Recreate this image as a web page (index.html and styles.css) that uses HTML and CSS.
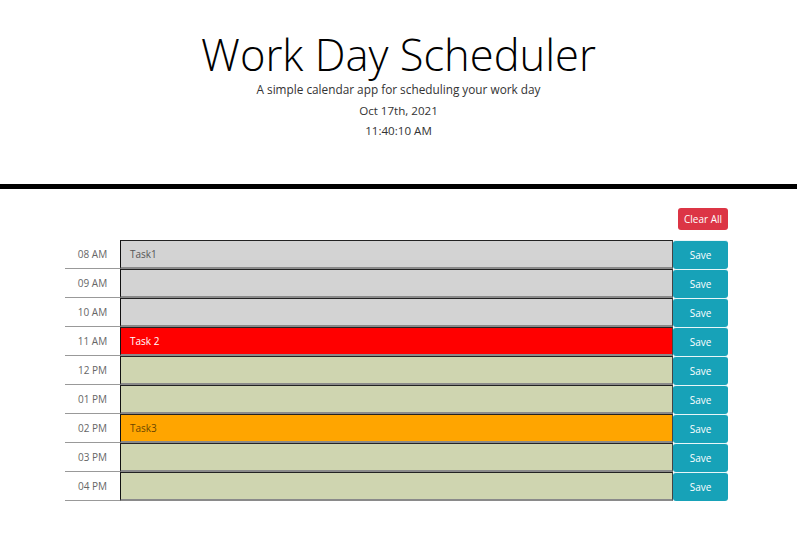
FILE: index.html
```html
<!DOCTYPE html>
<html lang="en">
<head>
<meta charset="utf-8">
<title>Work Day Scheduler</title>
<link rel="stylesheet" href="styles.css">
</head>
<body>
<header class="jumbotron">
  <h1 class="title">Work Day Scheduler</h1>
  <p class="lead">A simple calendar app for scheduling your work day</p>
  <p class="date">Oct 17th, 2021</p>
  <p class="clock">11:40:10 AM</p>
</header>
<main class="container">
  <div class="toolbar"><button class="clear-btn">Clear All</button></div>
  <div class="row"><div class="hour">08 AM</div><div class="description past">Task1</div><button class="save-btn">Save</button></div>
  <div class="row"><div class="hour">09 AM</div><div class="description past"></div><button class="save-btn">Save</button></div>
  <div class="row"><div class="hour">10 AM</div><div class="description past"></div><button class="save-btn">Save</button></div>
  <div class="row"><div class="hour">11 AM</div><div class="description present">Task 2</div><button class="save-btn">Save</button></div>
  <div class="row"><div class="hour">12 PM</div><div class="description future"></div><button class="save-btn">Save</button></div>
  <div class="row"><div class="hour">01 PM</div><div class="description future"></div><button class="save-btn">Save</button></div>
  <div class="row"><div class="hour">02 PM</div><div class="description marked">Task3</div><button class="save-btn">Save</button></div>
  <div class="row"><div class="hour">03 PM</div><div class="description future"></div><button class="save-btn">Save</button></div>
  <div class="row"><div class="hour">04 PM</div><div class="description future"></div><button class="save-btn">Save</button></div>
</main>
</body>
</html>
```
FILE: styles.css
```css
* { box-sizing: border-box; }
body {
  margin: 0;
  font-family: "Open Sans", "Liberation Sans", sans-serif;
  color: #212529;
  background: #fff;
}
.jumbotron {
  text-align: center;
  padding-top: 31px;
  height: 189px;
  border-bottom: 5px solid #000;
}
.title {
  margin: 0;
  font-size: 43.5px;
  font-weight: 300;
  line-height: 48px;
  color: #000;
}
.lead {
  margin: 2px 0 0;
  font-size: 11.8px;
  line-height: 16px;
  color: #333;
}
.date {
  margin: 6px 0 0;
  font-size: 11.6px;
  line-height: 16px;
  color: #333;
}
.clock {
  margin: 4px 0 0;
  font-size: 11.6px;
  line-height: 16px;
  color: #333;
}
.container {
  margin: 0 69px 0 65px;
  padding-top: 19px;
}
.toolbar {
  display: flex;
  justify-content: flex-end;
  margin-bottom: 10px;
}
.clear-btn {
  height: 22px;
  width: 50px;
  padding: 0;
  border: none;
  border-radius: 3px;
  background: #dc3545;
  color: #fff;
  font-family: inherit;
  font-size: 10px;
}
.row {
  display: flex;
  height: 29px;
}
.hour {
  width: 55px;
  display: flex;
  align-items: center;
  justify-content: center;
  font-size: 10px;
  color: #666;
  border-bottom: 1px solid #999;
}
.description {
  flex: 1;
  display: flex;
  align-items: center;
  padding-left: 9px;
  font-size: 10px;
  border-top: 1px solid #222;
  border-left: 1px solid #111;
  border-right: 1px solid #444;
  border-bottom: 2px solid #8a8a8a;
}
.past { background: #d3d3d3; color: #555; }
.present { background: #ff0000; color: #fff; }
.future { background: #cfd5b0; }
.marked { background: #ffa500; color: #6a4500; }
.save-btn {
  width: 55px;
  padding: 0;
  border: none;
  border-top: 1px solid #e8f6f8;
  border-radius: 3px;
  background: #17a2b8;
  color: #fff;
  font-family: inherit;
  font-size: 10px;
}
```
